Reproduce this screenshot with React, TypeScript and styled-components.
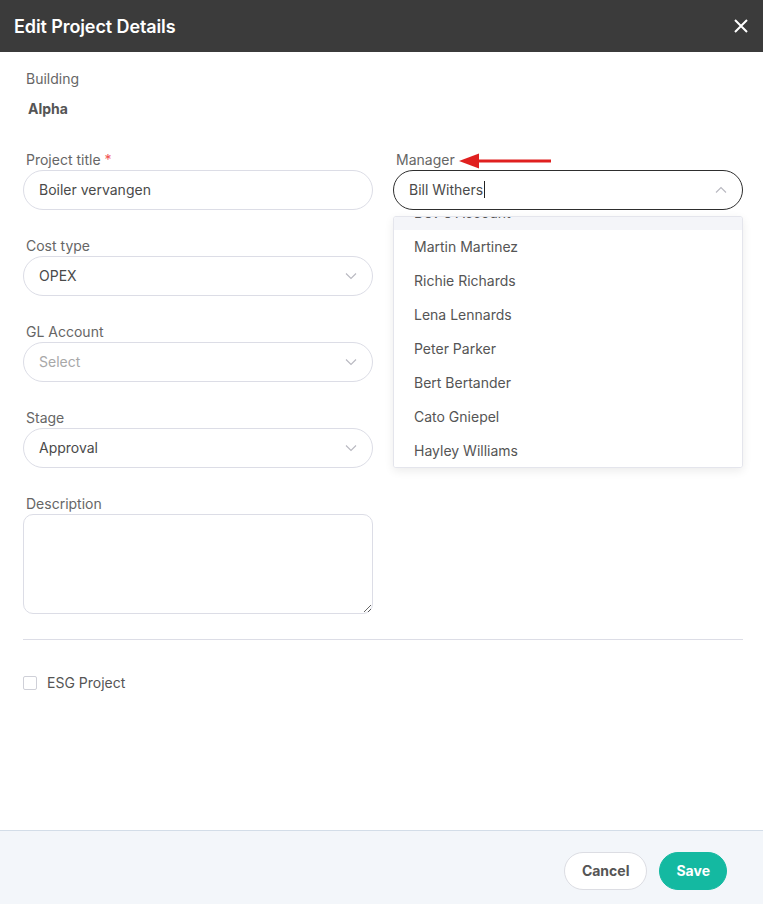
import React, { useLayoutEffect, useRef } from "react";
import styled, { createGlobalStyle } from "styled-components";

const Global = createGlobalStyle`
  * { box-sizing: border-box; }
  html, body { margin: 0; padding: 0; background: #fff; }
  body { font-family: Inter, "Noto Sans", Arial, sans-serif; }
`;

const Page = styled.div`
  height: 904px;
  display: flex;
  flex-direction: column;
`;

const Header = styled.header`
  height: 52px;
  background: #3b3b3b;
  display: flex;
  align-items: center;
  justify-content: space-between;
  padding: 0 14px 0 14px;
  flex-shrink: 0;
`;

const Title = styled.h1`
  margin: 0;
  color: #fff;
  font-size: 18px;
  font-weight: 600;
  letter-spacing: -0.1px;
`;

const CloseBtn = styled.button`
  background: none;
  border: none;
  padding: 0;
  width: 16px;
  height: 16px;
  display: flex;
  align-items: center;
  justify-content: center;
  cursor: pointer;
`;

const Body = styled.main`
  flex: 1;
  padding: 17px 20px 0 23px;
`;

const StaticBlock = styled.div`
  padding-left: 3px;
  display: flex;
  flex-direction: column;
  gap: 10px;
  margin-bottom: 31px;
`;

const Label = styled.label<{ $flush?: boolean }>`
  display: flex;
  align-items: center;
  gap: 4px;
  height: 20px;
  font-size: 14px;
  line-height: 20px;
  color: #666;
  padding-left: ${(p) => (p.$flush ? "0" : "3px")};
`;

const Required = styled.span`
  color: #f05252;
`;

const Value = styled.div`
  font-size: 14px;
  line-height: 20px;
  font-weight: 700;
  color: #555;
  padding-left: 2px;
`;

const Columns = styled.div`
  display: grid;
  grid-template-columns: 350px 350px;
  column-gap: 20px;
  align-items: start;
`;

const Column = styled.div`
  display: flex;
  flex-direction: column;
  gap: 26px;
`;

const Field = styled.div`
  display: flex;
  flex-direction: column;
  position: relative;
`;

const InputBox = styled.div<{ $active?: boolean }>`
  height: 40px;
  border: 1px solid ${(p) => (p.$active ? "#2e2e2e" : "#dcdde6")};
  border-radius: 20px;
  display: flex;
  align-items: center;
  justify-content: space-between;
  padding: 0 15px 0 15px;
  background: #fff;
`;

const InputText = styled.span<{ $placeholder?: boolean }>`
  font-size: 14px;
  line-height: 18px;
  margin-top: -1px;
  color: ${(p) => (p.$placeholder ? "#a8a8a8" : "#4a4a4a")};
  display: flex;
  align-items: center;
`;

const Caret = styled.span`
  display: inline-block;
  width: 1px;
  height: 17px;
  background: #222;
  margin-left: 1px;
`;

const TextArea = styled.textarea`
  height: 100px;
  width: 100%;
  border: 1px solid #dcdde6;
  border-radius: 10px;
  resize: vertical;
  font-family: inherit;
  font-size: 14px;
  padding: 10px 15px;
  outline: none;
  display: block;
`;

const Divider = styled.hr`
  border: none;
  border-top: 1px solid #dcdde6;
  margin: 25px 0 0 0;
`;

const CheckRow = styled.div`
  display: flex;
  align-items: center;
  gap: 10px;
  margin-top: 34px;
`;

const CheckBox = styled.span`
  width: 14px;
  height: 14px;
  border: 1px solid #cfd0d8;
  border-radius: 2px;
  background: #fff;
`;

const CheckLabel = styled.span`
  font-size: 14px;
  color: #555;
`;

const Dropdown = styled.div`
  position: absolute;
  top: 66px;
  left: 0;
  right: 0;
  height: 252px;
  background: #fff;
  border: 1px solid #e4e5ec;
  border-radius: 3px;
  box-shadow: 0 3px 10px rgba(0, 0, 0, 0.08);
  overflow: hidden;
  z-index: 5;
`;

const OptionList = styled.ul`
  list-style: none;
  margin: 0;
  padding: 0 0 4px 0;
  height: 100%;
  overflow: hidden;
  position: relative;
`;

const Option = styled.li<{ $hover?: boolean }>`
  height: 34px;
  display: flex;
  align-items: center;
  padding-left: 20px;
  padding-bottom: 1px;
  font-size: 14px;
  color: #555;
  background: ${(p) => (p.$hover ? "#f4f5f9" : "#fff")};
`;

const Arrow = styled.svg`
  position: absolute;
  left: 66px;
  top: 3px;
`;

const Footer = styled.footer`
  height: 74px;
  flex-shrink: 0;
  background: #f3f6fa;
  border-top: 1px solid #d3dde8;
  display: flex;
  align-items: center;
  justify-content: flex-end;
  gap: 12px;
  padding: 6px 36px 0 0;
`;

const Button = styled.button<{ $primary?: boolean }>`
  height: 38px;
  border-radius: 19px;
  padding: 0 ${(p) => (p.$primary ? "16px" : "17px")};
  font-family: inherit;
  font-size: 14px;
  font-weight: 700;
  cursor: pointer;
  border: 1px solid ${(p) => (p.$primary ? "#14b9a1" : "#dcdde3")};
  background: ${(p) => (p.$primary ? "#14b9a1" : "#fff")};
  color: ${(p) => (p.$primary ? "#fff" : "#555")};
`;

const Chevron = ({ up }: { up?: boolean }) => (
  <svg width="12" height="8" viewBox="0 0 12 8" fill="none">
    <path
      d={up ? "M1 6.5L6 1.5L11 6.5" : "M1 1.5L6 6.5L11 1.5"}
      stroke="#b8b8c0"
      strokeWidth="1.1"
    />
  </svg>
);

const options = [
  "Dev's Account",
  "Martin Martinez",
  "Richie Richards",
  "Lena Lennards",
  "Peter Parker",
  "Bert Bertander",
  "Cato Gniepel",
  "Hayley Williams",
];

export default function App() {
  const listRef = useRef<HTMLUListElement>(null);
  useLayoutEffect(() => {
    if (listRef.current) listRef.current.scrollTop = 21;
  }, []);

  return (
    <Page>
      <Global />
      <Header>
        <Title>Edit Project Details</Title>
        <CloseBtn aria-label="Close">
          <svg width="14" height="14" viewBox="0 0 14 14">
            <path d="M1 1L13 13M13 1L1 13" stroke="#fff" strokeWidth="2" />
          </svg>
        </CloseBtn>
      </Header>
      <Body>
        <StaticBlock>
          <Label as="div" $flush>
            Building
          </Label>
          <Value>Alpha</Value>
        </StaticBlock>
        <Columns>
          <Column>
            <Field>
              <Label>
                Project title <Required>*</Required>
              </Label>
              <InputBox>
                <InputText>Boiler vervangen</InputText>
              </InputBox>
            </Field>
            <Field>
              <Label>Cost type</Label>
              <InputBox>
                <InputText>OPEX</InputText>
                <Chevron />
              </InputBox>
            </Field>
            <Field>
              <Label>GL Account</Label>
              <InputBox>
                <InputText $placeholder>Select</InputText>
                <Chevron />
              </InputBox>
            </Field>
            <Field>
              <Label>Stage</Label>
              <InputBox>
                <InputText>Approval</InputText>
                <Chevron />
              </InputBox>
            </Field>
            <Field>
              <Label>Description</Label>
              <TextArea />
            </Field>
          </Column>
          <Column>
            <Field>
              <Label>Manager</Label>
              <Arrow width="94" height="16" viewBox="0 0 94 16">
                <path d="M18 8H92" stroke="#e0201f" strokeWidth="3" />
                <path d="M0 8L20 0.5V15.5Z" fill="#e0201f" />
              </Arrow>
              <InputBox $active>
                <InputText>
                  Bill Withers
                  <Caret />
                </InputText>
                <Chevron up />
              </InputBox>
              <Dropdown>
                <OptionList ref={listRef}>
                  {options.map((o, i) => (
                    <Option key={o} $hover={i === 0}>
                      {o}
                    </Option>
                  ))}
                </OptionList>
              </Dropdown>
            </Field>
          </Column>
        </Columns>
        <Divider />
        <CheckRow>
          <CheckBox />
          <CheckLabel>ESG Project</CheckLabel>
        </CheckRow>
      </Body>
      <Footer>
        <Button>Cancel</Button>
        <Button $primary>Save</Button>
      </Footer>
    </Page>
  );
}
